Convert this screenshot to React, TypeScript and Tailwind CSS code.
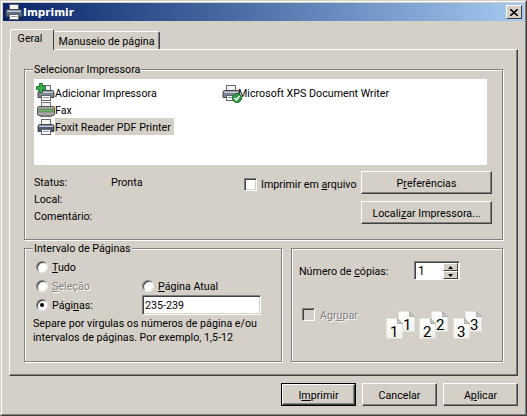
const etched = "relative border border-[#808080] shadow-[1px_1px_0_#fff,inset_1px_1px_0_#fff]"

function Printer({ paper = "#f4f4f4", body = "#6f7a90", className = "" }: { paper?: string; body?: string; className?: string }) {
  return (
    <svg width="18" height="16" viewBox="0 0 18 16" className={className}>
      <rect x="4.5" y="0.5" width="9" height="6" fill={paper} stroke="#666" />
      <path d="M1 7.5 Q1 5.5 3 5.5 H15 Q17 5.5 17 7.5 V12.5 H1 Z" fill={body} stroke="#444" />
      <rect x="2" y="6.5" width="14" height="1.5" fill="#c4cad6" />
      <rect x="4.5" y="10.5" width="9" height="5" fill="#fff" stroke="#666" />
      <rect x="6" y="12" width="6" height="1" fill="#8a93a6" />
    </svg>
  )
}

function PrinterItem({ kind }: { kind: "add" | "fax" | "foxit" | "default" }) {
  if (kind === "fax") {
    return (
      <svg width="18" height="16" viewBox="0 0 18 16" className="shrink-0">
        <rect x="4.5" y="0.5" width="9" height="4" fill="#f2f2f2" stroke="#777" />
        <rect x="0.5" y="4.5" width="17" height="9" rx="1.5" fill="#a9aca6" stroke="#555" />
        <rect x="2" y="7" width="14" height="3" fill="#6fae6a" stroke="#4b5a4b" strokeWidth="0.5" />
        <rect x="3" y="13" width="12" height="2" fill="#777" />
      </svg>
    )
  }
  return (
    <div className="relative w-[18px] h-4 shrink-0">
      <Printer body={kind === "foxit" ? "#4c5a78" : "#7d8796"} />
      {kind === "add" && (
        <svg width="10" height="10" viewBox="0 0 10 10" className="absolute -left-px -top-[2px]">
          <path d="M3.5 .5 H6.5 V3.5 H9.5 V6.5 H6.5 V9.5 H3.5 V6.5 H.5 V3.5 H3.5 Z" fill="#35b04a" stroke="#1c7a30" />
        </svg>
      )}
      {kind === "default" && (
        <svg width="10" height="10" viewBox="0 0 10 10" className="absolute right-[-2px] bottom-[-2px]">
          <circle cx="5" cy="5" r="4.5" fill="#2f9e3f" stroke="#1a6d2a" />
          <path d="M2.5 5 L4.3 7 L7.5 3" fill="none" stroke="#fff" strokeWidth="1.5" />
        </svg>
      )}
    </div>
  )
}

function Btn({ children, w = "w-[75px]", isDefault = false }: { children: React.ReactNode; w?: string; isDefault?: boolean }) {
  if (isDefault) {
    return (
      <div className={`${w} h-[23px] shrink-0 border border-black`}>
        <div className="h-full flex items-center justify-center pt-[2px] border border-t-white border-l-white border-r-[#404040] border-b-[#404040] shadow-[inset_-1px_-1px_0_#808080]">
          {children}
        </div>
      </div>
    )
  }
  return (
    <div className={`${w} h-[23px] shrink-0 flex items-center justify-center pt-[2px] border border-t-white border-l-white border-r-[#404040] border-b-[#404040] shadow-[inset_-1px_-1px_0_#808080]`}>
      {children}
    </div>
  )
}

function Radio({ checked = false }: { checked?: boolean }) {
  return (
    <div className="w-3 h-3 shrink-0 flex items-center justify-center rounded-full bg-white border border-t-[#808080] border-l-[#808080] border-r-[#e8e6e0] border-b-[#e8e6e0] shadow-[inset_1px_1px_0_#404040]">
      {checked && <div className="w-1 h-1 rounded-full bg-black" />}
    </div>
  )
}

function Check({ disabled = false }: { disabled?: boolean }) {
  return (
    <div className={`w-[13px] h-[13px] shrink-0 border border-t-[#808080] border-l-[#808080] border-r-white border-b-white shadow-[inset_1px_1px_0_#404040,inset_-1px_-1px_0_#d4d0c8] ${disabled ? "bg-[#d4d0c8]" : "bg-white"}`} />
  )
}

function CollateIcon() {
  const sets = [
    { x: 0, n: "1" },
    { x: 33, n: "2" },
    { x: 67, n: "3" },
  ]
  const page = "M.5 .5 H11.5 L16.5 5.5 V20.5 H.5 Z"
  return (
    <svg width="96" height="32" viewBox="0 0 96 32" className="shrink-0">
      <defs>
        <linearGradient id="pg" x1="0" y1="0" x2="0" y2="1">
          <stop offset="0" stopColor="#fff" />
          <stop offset="1" stopColor="#f0f0ec" />
        </linearGradient>
      </defs>
      {sets.map((s) => (
        <g key={s.n} transform={`translate(${s.x} 0)`}>
          <g transform="translate(12 0)">
            <path d={page} fill="url(#pg)" stroke="#e4e2dc" />
            <path d="M11.5 .5 V5.5 H16.5 Z" fill="#c8c8c4" stroke="#b0aea8" />
            <text x="5" y="19" fontSize="15" fill="#000" fontFamily="Roboto, sans-serif">{s.n}</text>
          </g>
          <g transform="translate(0 7)">
            <path d={page} fill="url(#pg)" stroke="#e4e2dc" />
            <path d="M11.5 .5 V5.5 H16.5 Z" fill="#c8c8c4" stroke="#b0aea8" />
            <text x="4" y="19" fontSize="15" fill="#000" fontFamily="Roboto, sans-serif">{s.n}</text>
          </g>
        </g>
      ))}
    </svg>
  )
}

export default function App() {
  return (
    <div className="w-[527px] h-[416px] overflow-hidden bg-[#d4d0c8] text-black text-[10.7px] leading-[14px] font-['Roboto',Arial,sans-serif] border border-t-[#d4d0c8] border-l-[#d4d0c8] border-r-[#404040] border-b-[#404040]">
      <div className="h-full border border-t-white border-l-white border-r-[#808080] border-b-[#808080] p-px flex flex-col">
        {/* Title bar */}
        <div className="h-[18px] shrink-0 flex items-center pl-[2px] pr-[2px] bg-gradient-to-r from-[#0a246a] to-[#a6caf0]">
          <Printer body="#5d6a86" className="shrink-0" />
          <span className="text-white font-bold text-[10.5px] font-['DejaVu_Sans',sans-serif]">Imprimir</span>
          <div className="ml-auto w-4 h-[14px] bg-[#d4d0c8] flex items-center justify-center border border-t-white border-l-white border-r-[#404040] border-b-[#404040]">
            <svg width="8" height="7" viewBox="0 0 8 7">
              <path d="M0 0 L8 7 M8 0 L0 7" stroke="#000" strokeWidth="1.6" />
            </svg>
          </div>
        </div>

        <div className="flex-1 flex flex-col px-[6px] pt-2">
          {/* Tabs */}
          <div className="h-5 flex items-end shrink-0 relative z-10">
            <div className="ml-px w-[44px] h-[21px] -mb-px bg-[#d4d0c8] flex items-center justify-center pb-[2px] pr-[4px] border-t border-l border-r border-t-white border-l-white border-r-[#404040] rounded-t-[2px]">
              Geral
            </div>
            <div className="w-[106px] h-[18px] flex items-center justify-center pt-[2px] border-t border-r border-t-white border-r-[#404040] rounded-t-[2px] shadow-[inset_-1px_0_0_#808080]">
              Manuseio de página
            </div>
          </div>

          {/* Panel */}
          <div className="h-[327px] shrink-0 border border-t-white border-l-white border-r-[#404040] border-b-[#404040] shadow-[inset_-1px_-1px_0_#808080] px-[14px] pt-[19px]">
            <div className={`${etched} h-[171px] pl-[9px] pr-[15px] pt-[9px]`}>
              <span className="absolute -top-[7px] left-2 px-[1px] bg-[#d4d0c8]">Selecionar Impressora</span>
              <div className="h-[86px] bg-white flex pt-[5px]">
                <div className="w-[188px] pl-[3px] flex flex-col">
                  <div className="h-[17px] flex items-center"><PrinterItem kind="add" /><span className="pt-[2px]">Adicionar Impressora</span></div>
                  <div className="h-[17px] flex items-center"><PrinterItem kind="fax" /><span className="pt-[2px]">Fax</span></div>
                  <div className="h-[17px] flex items-center"><PrinterItem kind="foxit" /><span className="h-[17px] leading-[19px] bg-[#d4d0c8] pr-[3px]">Foxit Reader PDF Printer</span></div>
                </div>
                <div className="h-[17px] flex items-center"><PrinterItem kind="default" /><span className="pt-[2px] -ml-[2px]">Microsoft XPS Document Writer</span></div>
              </div>

              <div className="flex mt-[6px]">
                <div className="w-[210px] shrink-0 flex flex-col pt-[5px] gap-[3px]">
                  <div className="flex"><span className="w-[77px]">Status:</span><span>Pronta</span></div>
                  <span>Local:</span>
                  <span>Comentário:</span>
                </div>
                <div className="w-[117px] shrink-0 flex items-center gap-[4px] h-[14px] mt-[6px]">
                  <Check />
                  <span className="whitespace-nowrap pt-[2px]">Imprimir em <u>a</u>rquivo</span>
                </div>
                <div className="flex flex-col gap-[7px]">
                  <Btn w="w-[131px]">P<u>r</u>eferências</Btn>
                  <Btn w="w-[131px]">Locali<u>z</u>ar Impressora...</Btn>
                </div>
              </div>
            </div>

            <div className="flex gap-[9px] mt-2">
              <div className={`${etched} w-[258px] h-[114px] pt-2`}>
                <span className="absolute -top-[7px] left-2 px-[1px] bg-[#d4d0c8]">Intervalo de Páginas</span>
                <div className="grid grid-cols-[106px_1fr] pl-[11px]">
                  <div className="h-[19px] col-span-2 flex items-center gap-[4px]"><Radio /><span className="pt-[2px]"><u>T</u>udo</span></div>
                  <div className="h-[19px] flex items-center gap-[4px]"><Radio /><span className="pt-[2px] text-[#808080] [text-shadow:1px_1px_0_#fff]"><u>S</u>eleção</span></div>
                  <div className="h-[19px] flex items-center gap-[4px]"><Radio /><span className="pt-[2px]"><u>P</u>ágina Atual</span></div>
                  <div className="h-[20px] flex items-center gap-[4px]"><Radio checked /><span className="pt-[2px]">Pági<u>n</u>as:</span></div>
                  <div className="h-[20px] w-[119px] bg-white flex items-center pl-[2px] pt-[2px] border border-t-[#808080] border-l-[#808080] border-r-white border-b-white shadow-[inset_1px_1px_0_#404040,inset_-1px_-1px_0_#d4d0c8]">235-239</div>
                </div>
                <p className="pl-2 mt-[2px] whitespace-nowrap">Separe por vírgulas os números de página e/ou<br />intervalos de páginas. Por exemplo, 1,5-12</p>
              </div>

              <div className={`${etched} flex-1 h-[114px] pl-[7px] pt-[12px]`}>
                <div className="flex items-center h-[19px]">
                  <span className="w-[115px] pt-[2px]">Número de <u>c</u>ópias:</span>
                  <div className="w-[46px] h-[19px] bg-white flex items-center justify-between pl-[3px] pr-px border border-t-[#808080] border-l-[#808080] border-r-white border-b-white shadow-[inset_1px_1px_0_#404040]">
                    <span className="text-[12px]">1</span>
                    <div className="w-[15px] h-[16px] mt-px flex flex-col">
                      <div className="flex-1 bg-[#d4d0c8] flex items-center justify-center border border-t-white border-l-white border-r-[#404040] border-b-[#404040]">
                        <svg width="5" height="3" viewBox="0 0 5 3"><path d="M2.5 0 L5 3 H0 Z" fill="#000" /></svg>
                      </div>
                      <div className="flex-1 bg-[#d4d0c8] flex items-center justify-center border border-t-white border-l-white border-r-[#404040] border-b-[#404040]">
                        <svg width="5" height="3" viewBox="0 0 5 3"><path d="M0 0 H5 L2.5 3 Z" fill="#000" /></svg>
                      </div>
                    </div>
                  </div>
                </div>
                <div className="flex mt-[28px] pl-[3px]">
                  <Check disabled />
                  <span className="ml-[5px] pt-px w-[66px] shrink-0 text-[#808080] [text-shadow:1px_1px_0_#fff]">Agr<u>u</u>par</span>
                  <div className="mt-[3px]"><CollateIcon /></div>
                </div>
              </div>
            </div>
          </div>

          {/* Bottom buttons */}
          <div className="flex justify-end gap-[6px] mt-[7px]">
            <Btn isDefault><span>I<u>m</u>primir</span></Btn>
            <Btn>Cancelar</Btn>
            <Btn><span>A<u>p</u>licar</span></Btn>
          </div>
        </div>
      </div>
    </div>
  )
}
